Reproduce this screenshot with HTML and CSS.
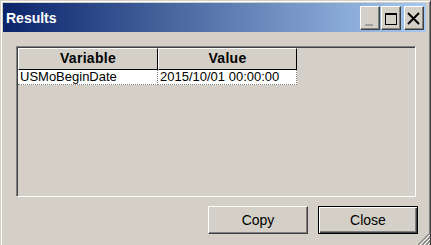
FILE: index.html
```html
<!DOCTYPE html>
<html lang="en">

<head>
    <meta charset="UTF-8">
    <title>Results</title>
    <link rel="stylesheet" href="styles.css">
</head>

<body>
<div class="window">
    <div class="titlebar">
        <span class="title">Results</span>
        <div class="caption">
            <span class="cbtn">
                <svg width="18" height="22" viewBox="0 0 18 22"><rect x="4" y="17" width="8" height="2" fill="#a0a0a0"/></svg>
            </span>
            <span class="cbtn cbtn-max">
                <svg width="18" height="22" viewBox="0 0 18 22"><rect x="3.5" y="6.5" width="11" height="11" fill="none" stroke="#000"/><rect x="3" y="6" width="12" height="2" fill="#000"/></svg>
            </span>
            <span class="cbtn cbtn-close">
                <svg width="18" height="22" viewBox="0 0 18 22"><path d="M3 6 L14 17 M14 6 L3 17" stroke="#000" stroke-width="2"/></svg>
            </span>
        </div>
    </div>

    <div class="content">
        <div class="grid">
            <div class="row head">
                <div class="hcell c1">Variable</div>
                <div class="hcell c2">Value</div>
            </div>
            <div class="row">
                <div class="cell c1">USMoBeginDate</div>
                <div class="cell c2">2015/10/01 00:00:00</div>
            </div>
        </div>

        <div class="buttons">
            <button class="btn">Copy</button>
            <button class="btn btn-default">Close</button>
        </div>
    </div>

    <svg class="grip" width="12" height="12" viewBox="0 0 12 12">
        <path d="M11 0 L0 11 M11 4 L4 11 M11 8 L8 11" stroke="#808080" stroke-width="1.2"/>
        <path d="M12 1 L1 12 M12 5 L5 12 M12 9 L9 12" stroke="#fff" stroke-width="1"/>
    </svg>
</div>
</body>

</html>
```

FILE: styles.css
```css
html,
body {
    margin: 0;
    padding: 0;
    overflow: hidden;
    background: #d4d0c8;
}

.window {
    position: relative;
    width: 431px;
    height: 250px;
    box-sizing: border-box;
    padding: 2px 4px 2px 2px;
    background: #d4d0c8;
    border: 1px solid;
    border-color: #d4d0c8 #404040 #404040 #d4d0c8;
    box-shadow: inset 1px 1px #fff, inset -1px -1px #808080;
    font-family: "Liberation Sans", Arial, sans-serif;
}

.titlebar {
    height: 29px;
    display: flex;
    align-items: center;
    padding-left: 3px;
    background: linear-gradient(to right, #0a246a, #a6caf0);
}

.title {
    color: #fff;
    font-weight: bold;
    font-size: 14px;
}

.caption {
    margin-left: auto;
    margin-right: 2px;
    display: flex;
}

.cbtn {
    width: 20px;
    height: 24px;
    box-sizing: border-box;
    background: #d4d0c8;
    border: 1px solid;
    border-color: #fff #404040 #404040 #fff;
    box-shadow: inset -1px -1px #808080;
    display: flex;
}

.cbtn-max {
    margin-left: 1px;
}

.cbtn-close {
    margin-left: 3px;
}

.content {
    padding: 14px 0 0 13px;
}

.grid {
    width: 400px;
    height: 151px;
    box-sizing: border-box;
    padding: 1px;
    border: 1px solid;
    border-color: #808080 #fff #fff #808080;
    box-shadow: inset 1px 1px #404040, inset -1px -1px #d4d0c8;
    font-size: 13px;
}

.row {
    display: flex;
}

.c1 {
    width: 140px;
}

.c2 {
    width: 139px;
}

.hcell {
    height: 22px;
    box-sizing: border-box;
    border: 1px solid;
    border-color: #fff #000 #000 #fff;
    font-weight: bold;
    font-size: 14px;
    letter-spacing: 0.3px;
    text-align: center;
    line-height: 19px;
    color: #000;
}

.cell {
    height: 15px;
    box-sizing: border-box;
    background: #fff;
    border-right: 1px dotted #808080;
    border-bottom: 1px dotted #808080;
    padding-left: 2px;
    line-height: 14px;
    color: #000;
}

.buttons {
    display: flex;
    justify-content: flex-end;
    gap: 10px;
    margin-top: 9px;
    padding-right: 8px;
}

.btn {
    width: 100px;
    height: 28px;
    box-sizing: border-box;
    margin: 0;
    padding: 0;
    background: #d4d0c8;
    border: 1px solid;
    border-color: #fff #404040 #404040 #fff;
    box-shadow: inset -1px -1px #808080;
    font-family: "Liberation Sans", Arial, sans-serif;
    font-size: 14px;
    color: #000;
}

.btn-default {
    border: 1px solid #000;
    box-shadow: inset 1px 1px #fff, inset -1px -1px #404040, inset -2px -2px #808080;
}

.grip {
    position: absolute;
    left: 417px;
    top: 233px;
}
```
